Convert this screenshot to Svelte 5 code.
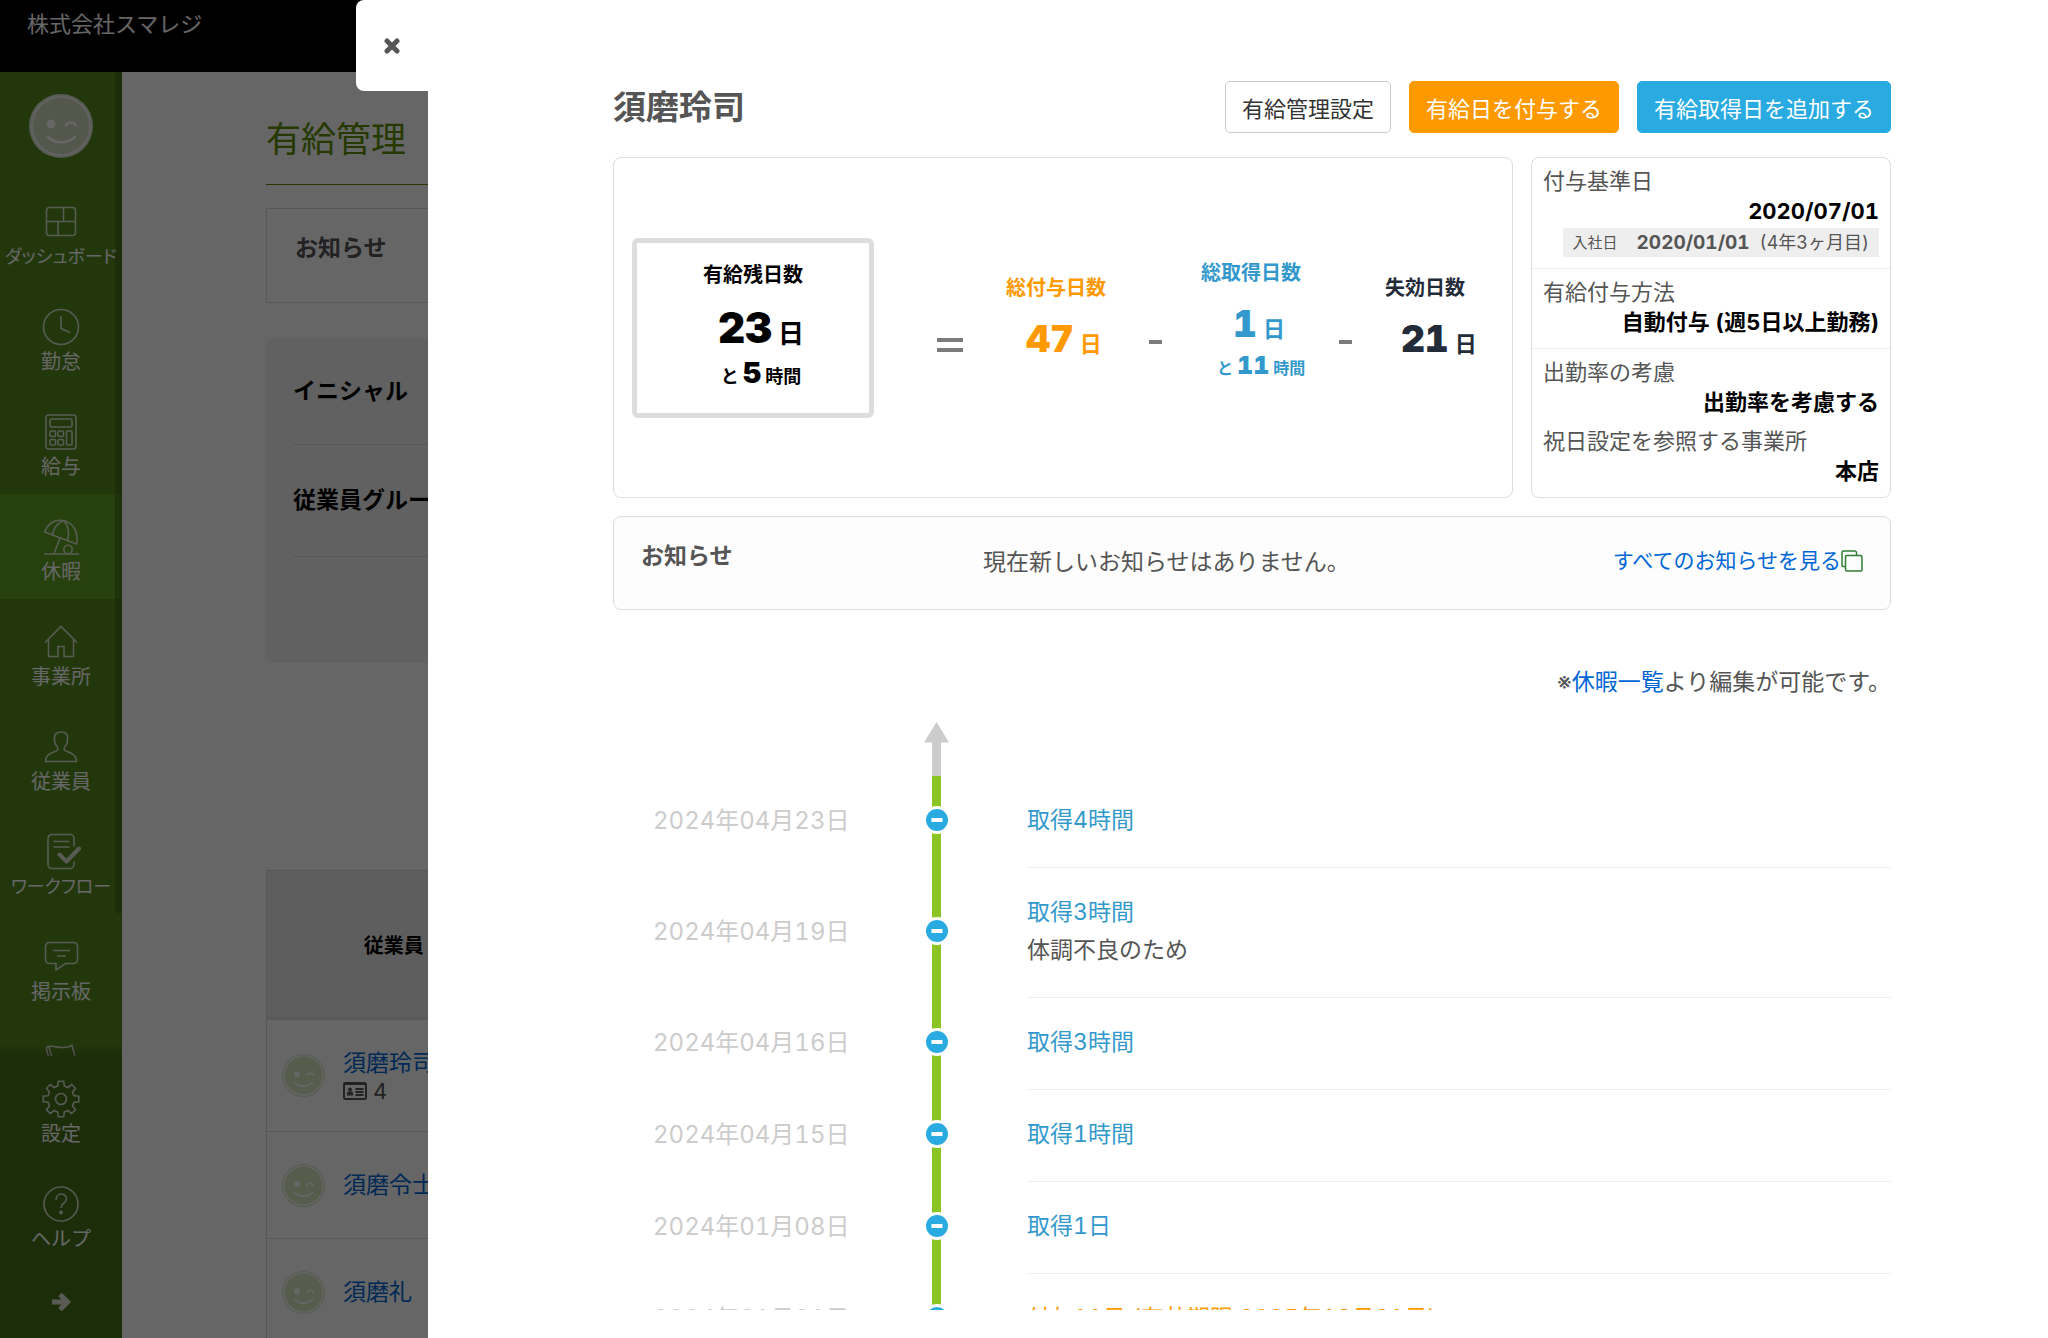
<script>
  const menu = [
    { label: 'ダッシュボード', icon: 'dashboard', tight: true },
    { label: '勤怠', icon: 'clock' },
    { label: '給与', icon: 'calc' },
    { label: '休暇', icon: 'umbrella', active: true },
    { label: '事業所', icon: 'house' },
    { label: '従業員', icon: 'person' },
    { label: 'ワークフロー', icon: 'workflow', tight: true },
    { label: '掲示板', icon: 'board' },
    { label: 'イベント', icon: 'flag' }
  ];
  const tools = [
    { label: '設定', icon: 'gear' },
    { label: 'ヘルプ', icon: 'help' }
  ];
  const staff = [
    { name: '須磨玲司', code: '4' },
    { name: '須磨令士' },
    { name: '須磨礼' }
  ];
  const history = [
    { date: '2024年04月23日', title: '取得4時間' },
    { date: '2024年04月19日', title: '取得3時間', note: '体調不良のため' },
    { date: '2024年04月16日', title: '取得3時間' },
    { date: '2024年04月15日', title: '取得1時間' },
    { date: '2024年01月08日', title: '取得1日' },
    { date: '2024年01月01日', title: '付与11日 (有効期限 2025年12月31日)', grant: true }
  ];

  // Eight-toothed gear outline centred on (20, 20)
  const gear = (() => {
    const pts = [];
    for (let i = 0; i < 8; i++) {
      const a = (i * Math.PI) / 4 - Math.PI / 2;
      for (const [d, r] of [[-0.25, 13.4], [-0.15, 18], [0.15, 18], [0.25, 13.4]]) {
        pts.push(`${(20 + r * Math.cos(a + d)).toFixed(1)} ${(20 + r * Math.sin(a + d)).toFixed(1)}`);
      }
    }
    return `M${pts.join('L')}Z`;
  })();
</script>

{#snippet icon(name)}
  <svg class="icon" viewBox="0 0 40 40" aria-hidden="true">
    {#if name === 'dashboard'}
      <rect x="5.5" y="5.5" width="29" height="28" rx="3" />
      <path d="M5.5 19.5h29M22.5 5.5v14M17 19.5v14" />
    {:else if name === 'clock'}
      <circle cx="20" cy="20" r="17.5" />
      <path d="M20 9v12.5l9 4" />
    {:else if name === 'calc'}
      <rect x="5" y="3" width="30" height="34" rx="2.5" />
      <rect x="9" y="7" width="22" height="8" rx="1.5" />
      <rect x="9" y="19" width="5.5" height="5.5" rx="1" />
      <rect x="17" y="19" width="5.5" height="5.5" rx="1" />
      <rect x="9" y="27.5" width="5.5" height="5.5" rx="1" />
      <rect x="17" y="27.5" width="5.5" height="5.5" rx="1" />
      <rect x="25.5" y="19" width="5.5" height="14" rx="1" />
    {:else if name === 'umbrella'}
      <path d="M3.500 15C7 6.500 14 2 22 3.500C32 5.500 38 15 35.500 27Z" />
      <path d="M11.500 17.500C13 10 17 5.500 23 3.700C27.500 9 28.500 16 26.500 23M19 21L13 36.500M3 37h35" />
      <circle cx="27" cy="32.500" r="4.200" />
    {:else if name === 'house'}
      <path d="M4 20.500L20 4.500l16 16M7.500 17.500V34.500h9.500V24.500h6v10h9.500V17.500" />
    {:else if name === 'person'}
      <path d="M4.500 34.500h31c0-6-4-8-9.500-10c-3-1-3.500-2-2-5c2.500-2.500 2.500-4 2.500-9c0-3.500-2.500-5.500-6.500-5.500s-6.500 2-6.500 5.500c0 5 0 6.500 2.500 9c1.500 3 1 4-2 5c-5.500 2-9.500 4-9.500 10z" />
    {:else if name === 'workflow'}
      <path d="M33 14.500V6.500a4 4 0 0 0-4-4H11a4 4 0 0 0-4 4v26a4 4 0 0 0 4 4h18a4 4 0 0 0 4-4v-3M12.500 9.500h16M12.500 15h16" />
      <path class="thick" d="M18.500 22.500l7 7L38 16.500" />
    {:else if name === 'board'}
      <path d="M8.500 5.500h24a4 4 0 0 1 4 4v13a4 4 0 0 1-4 4H24.500L15 33V26.500H8.500a4 4 0 0 1-4-4v-13a4 4 0 0 1 4-4zM12 13.500h17M16 19h9" />
    {:else if name === 'flag'}
      <path d="M5 5.500L14 38M8 4.500L17 38M5 5.500L8 4.500C14 3 21 8.500 31 3.500L36 22" />
    {:else if name === 'gear'}
      <path d={gear} />
      <circle cx="20" cy="20" r="5.500" />
    {:else if name === 'help'}
      <circle cx="20" cy="20" r="17" />
      <path d="M15 16c0-8 10.500-7.500 10.500-1c0 4-5.500 4.500-5.500 9" />
      <circle class="solid" cx="20" cy="28.500" r="1.200" />
    {/if}
  </svg>
{/snippet}

{#snippet face()}
  <svg class="face" viewBox="0 0 66 66" aria-hidden="true">
    <circle class="rim" cx="33" cy="33" r="32" />
    <circle class="skin" cx="33" cy="33" r="29" />
    <circle class="eye" cx="23" cy="31" r="4.500" />
    <path class="line" d="M38 32.500c1.500-4 8-4 10 0M20 44c7 7 19 7 27 0" />
  </svg>
{/snippet}

<div class="app">
  <header class="topbar">株式会社スマレジ</header>
  <div class="body">
    <aside class="side">
      <nav class="menu">
        <div class="me">{@render face()}</div>
        {#each menu as m}
          <a href="#{m.icon}" class="item" class:active={m.active}>
            {@render icon(m.icon)}
            <span class:tight={m.tight}>{m.label}</span>
          </a>
        {/each}
        <div class="thumb"></div>
      </nav>
      <div class="tools">
        {#each tools as t}
          <a href="#{t.icon}" class="item">
            {@render icon(t.icon)}
            <span>{t.label}</span>
          </a>
        {/each}
        <button class="expand" aria-label="メニューを開く">
          <svg viewBox="0 0 22 22" aria-hidden="true"><path d="M2 11h15M10 3.500l7.500 7.500l-7.500 7.500" /></svg>
        </button>
      </div>
    </aside>

    <main class="main">
      <h1>有給管理</h1>
      <section class="news-back"><h2>お知らせ</h2></section>
      <section class="filter">
        <div class="frow">イニシャル</div>
        <div class="frow">従業員グループ</div>
      </section>
      <table class="staff">
        <thead>
          <tr><th class="who">従業員</th><th></th></tr>
        </thead>
        <tbody>
          {#each staff as s}
            <tr>
              <td>
                <div class="person">
                  {@render face()}
                  <div>
                    <a href="#staff">{s.name}</a>
                    {#if s.code}
                      <div class="code">
                        <svg viewBox="0 0 24 18" aria-hidden="true">
                          <rect x="1" y="1" width="22" height="16" rx="1.500" />
                          <path d="M1 2h22M12.500 7h8M12.500 10h8M12.500 13h8" />
                          <circle class="solid" cx="7" cy="7.500" r="2" />
                          <path class="solid" d="M4 13.500v-2.500q0-1.500 1.500-1.500h3q1.500 0 1.500 1.500v2.500z" />
                        </svg>
                        {s.code}
                      </div>
                    {/if}
                  </div>
                </div>
              </td>
              <td></td>
            </tr>
          {/each}
        </tbody>
      </table>
    </main>
  </div>

  <div class="shade"></div>

  <div class="drawer" role="dialog" aria-label="須磨玲司">
    <button class="close" aria-label="閉じる">
      <svg viewBox="0 0 16 16" aria-hidden="true"><path d="M3 3l10 10M13 3L3 13" /></svg>
    </button>

    <div class="head">
      <h2>須磨玲司</h2>
      <button class="btn">有給管理設定</button>
      <button class="btn orange">有給日を付与する</button>
      <button class="btn blue">有給取得日を追加する</button>
    </div>

    <div class="cards">
      <section class="card sum">
        <div class="stat remain">
          <div class="cap">有給残日数</div>
          <div class="val"><b>23</b>日</div>
          <div class="sub">と<b>5</b>時間</div>
        </div>
        <div class="op eq"><svg viewBox="0 0 26 14" aria-label="="><path d="M0 2h26M0 12h26" /></svg></div>
        <div class="stat total">
          <div class="cap">総付与日数</div>
          <div class="val"><b>47</b>日</div>
        </div>
        <div class="op"><svg viewBox="0 0 13 4" aria-label="-"><path d="M0 2h13" /></svg></div>
        <div class="stat used">
          <div class="cap">総取得日数</div>
          <div class="val"><b>1</b>日</div>
          <div class="sub">と<b>11</b>時間</div>
        </div>
        <div class="op"><svg viewBox="0 0 13 4" aria-label="-"><path d="M0 2h13" /></svg></div>
        <div class="stat lost">
          <div class="cap">失効日数</div>
          <div class="val"><b>21</b>日</div>
        </div>
      </section>

      <section class="card facts">
        <dl>
          <dt>付与基準日</dt>
          <dd>2020/07/01</dd>
          <dd class="joined"><small>入社日</small><b>2020/01/01</b><span>(4年3ヶ月目)</span></dd>
        </dl>
        <dl>
          <dt>有給付与方法</dt>
          <dd>自動付与 (週5日以上勤務)</dd>
        </dl>
        <dl>
          <dt>出勤率の考慮</dt>
          <dd>出勤率を考慮する</dd>
          <dt class="next">祝日設定を参照する事業所</dt>
          <dd>本店</dd>
        </dl>
      </section>
    </div>

    <section class="card news">
      <h3>お知らせ</h3>
      <p>現在新しいお知らせはありません。</p>
      <a href="#news">すべてのお知らせを見る<svg viewBox="0 0 22 22" aria-hidden="true"><rect x="4.500" y="5.500" width="16.500" height="15.500" rx="1.500" /><path d="M4.500 16.500H2.500a1.500 1.500 0 0 1-1.500-1.500V2.500a1.500 1.500 0 0 1 1.500-1.500H14a1.500 1.500 0 0 1 1.500 1.500v3" /></svg></a>
    </section>

    <p class="note">※<a href="#leave">休暇一覧</a>より編集が可能です。</p>

    <div class="timeline">
      <svg class="arrow" viewBox="0 0 27 54" aria-hidden="true"><path d="M13.500 0L26 20.500H18V54H9V20.500H1z" /></svg>
      {#each history as h}
        <div class="event">
          <time>{h.date}</time>
          <div class="axis">
            <svg viewBox="0 0 28 28" aria-hidden="true">
              <circle class="ring" cx="14" cy="14" r="14" />
              <circle class="dot" cx="14" cy="14" r="11" />
              <rect class="bar" x="8.500" y="12" width="11" height="4" />
            </svg>
          </div>
          <div class="what">
            <div class="title" class:grant={h.grant}>{h.title}</div>
            {#if h.note}<div>{h.note}</div>{/if}
          </div>
        </div>
      {/each}
    </div>
  </div>
</div>

<style>
  :global(body) {
    margin: 0;
    font-family: Inter, 'Noto Sans CJK JP', sans-serif;
    font-variant-numeric: tabular-nums;
    color: #555;
  }
  .app, .app * { box-sizing: border-box; }
  h1, h2, h3, p, dl, dd { margin: 0; }
  a { color: #0066d6; text-decoration: none; }
  button { font-family: inherit; cursor: pointer; }
  svg { display: block; fill: none; flex: none; }

  .app {
    position: relative;
    display: flex;
    flex-direction: column;
    height: 100vh;
    overflow: hidden;
    background: #fff;
  }
  .topbar {
    flex: none;
    height: 72px;
    padding: 0 27px;
    background: #000;
    color: #fff;
    font-size: 22px;
    line-height: 48px;
  }
  .body { flex: 1; min-height: 0; display: flex; }

  .side {
    flex: none;
    width: 122px;
    display: flex;
    flex-direction: column;
    background: #558c1e;
  }
  .menu { position: relative; flex: 1; min-height: 0; overflow: hidden; }
  .menu::after {
    content: '';
    position: absolute;
    inset: auto 0 0 0;
    height: 12px;
    background: linear-gradient(transparent, rgba(0, 0, 0, 0.2));
  }
  .thumb {
    position: absolute;
    top: 0;
    right: 0;
    width: 7px;
    height: 841px;
    border-radius: 4px;
    background: rgba(0, 0, 0, 0.2);
  }
  .me {
    display: flex;
    justify-content: center;
    height: 107px;
    padding-top: 21px;
  }
  .item {
    display: flex;
    flex-direction: column;
    align-items: center;
    height: 105px;
    padding-top: 23px;
    color: #fff;
    font-size: 20px;
    line-height: 28px;
    white-space: nowrap;
  }
  .item span { margin-top: 1px; }
  .item .tight { font-size: 18px; font-feature-settings: 'palt'; }
  .active { background: #60a023; }
  .icon { width: 40px; height: 40px; stroke: #f2f4ee; stroke-width: 1.6; opacity: 0.85; }
  .icon .thick { stroke-width: 4; stroke-linecap: round; stroke-linejoin: round; }
  .icon .solid { fill: #f2f4ee; }
  .tools { flex: none; background: #46721a; }
  .expand {
    display: flex;
    align-items: center;
    justify-content: center;
    width: 100%;
    height: 72px;
    padding: 0;
    border: 0;
    background: none;
  }
  .expand svg { width: 22px; height: 22px; stroke: #dfe5d6; stroke-width: 5; }

  .face { width: 66px; height: 66px; }
  .rim { fill: #dde3d2; }
  .skin { fill: #cfd9bd; stroke: #f2f4ee; stroke-width: 2; }
  .eye { fill: #fff; }
  .line { stroke: #fff; stroke-width: 2.5; stroke-linecap: round; }

  .main { flex: 1; min-width: 0; padding: 0 144px; }
  h1 {
    padding: 40px 0 17px;
    border-bottom: 1px solid #5c8f00;
    color: #5c8f00;
    font-size: 35px;
    font-weight: 400;
    line-height: 55px;
  }
  .news-back {
    height: 95px;
    margin-top: 23px;
    padding: 22px 28px;
    border: 1px solid #ddd;
  }
  .news-back h2 { color: #555; font-size: 23px; line-height: 34px; }
  .filter {
    height: 325px;
    margin-top: 35px;
    padding: 0 27px;
    border-radius: 8px;
    background: #f3f3f3;
  }
  .frow {
    height: 112px;
    border-bottom: 1px solid #ddd;
    color: #000;
    font-size: 23px;
    font-weight: 700;
    line-height: 110px;
  }
  .frow:first-child { height: 107px; line-height: 106px; }
  .staff {
    width: 100%;
    margin-top: 207px;
    border-collapse: collapse;
    border: 1px solid #d8d8d8;
  }
  th {
    height: 148px;
    padding: 0;
    border-bottom: 3px solid #ddd;
    background: #ebebeb;
    color: #000;
    font-size: 20px;
  }
  .who { width: 254px; }
  .staff td { height: 107px; padding: 0 15px; border-bottom: 1px solid #ddd; }
  .staff tr:first-child td { height: 113px; }
  .person { display: flex; align-items: center; gap: 18px; font-size: 23px; line-height: 30px; white-space: nowrap; }
  .person .face { width: 43px; height: 43px; }
  .person .rim { fill: none; stroke: #dfe8d0; stroke-width: 2; }
  .person .skin { fill: #d7e8bd; stroke: none; }
  .code { display: flex; align-items: center; gap: 6px; font-size: 22px; line-height: 26px; }
  .code svg { width: 24px; height: 18px; stroke: #555; stroke-width: 2; }
  .code .solid { fill: #555; stroke: none; }

  .shade { position: absolute; inset: 0; background: rgba(0, 0, 0, 0.6); }

  .drawer {
    position: absolute;
    inset: 0 0 0 428px;
    display: flex;
    flex-direction: column;
    padding: 81px 157px 28px 185px;
    background: #fff;
  }
  .close {
    position: absolute;
    top: 0;
    right: 100%;
    display: flex;
    align-items: center;
    justify-content: center;
    width: 72px;
    height: 91px;
    padding: 0;
    border: 0;
    border-radius: 8px 0 0 8px;
    background: #fff;
  }
  .close svg { width: 16px; height: 16px; stroke: #555; stroke-width: 5; stroke-linecap: round; }
  .head { display: flex; align-items: center; gap: 18px; }
  .head h2 { flex: 1; font-size: 33px; line-height: 52px; }
  .btn {
    height: 52px;
    padding: 0 16px;
    border: 1px solid #ccc;
    border-radius: 5px;
    background: #fff;
    color: #333;
    font-size: 22px;
  }
  .orange { border-color: #f90; background: #f90; color: #fff; }
  .blue { border-color: #29abe2; background: #29abe2; color: #fff; }

  .cards { display: flex; gap: 18px; margin-top: 24px; }
  .card { border: 1px solid #ddd; border-radius: 8px; }
  .sum {
    flex: 1;
    display: grid;
    grid-template-columns: 242px 132px 100px 95px 100px 84px 80px;
    align-items: center;
    padding-left: 18px;
  }
  .stat { font-weight: 700; text-align: center; white-space: nowrap; padding-bottom: 16px; }
  .cap { font-size: 20px; line-height: 30px; margin-bottom: 14px; }
  .val { padding-left: 16px; font-size: 22px; line-height: 44px; }
  .val b { margin-right: 6px; font-size: 37px; }
  .sub { padding-left: 16px; font-size: 16px; line-height: 28px; }
  .sub b { margin: 0 4px; font-size: 25px; }
  .remain {
    height: 180px;
    padding-top: 17px;
    border: 5px solid #ddd;
    border-radius: 6px;
    color: #000;
  }
  .remain .val { font-size: 26px; line-height: 48px; }
  .remain .val b { font-size: 42px; }
  .remain .sub { font-size: 18px; line-height: 30px; }
  .remain .sub b { font-size: 29px; }
  .total { color: #f90; }
  .used { color: #39c; }
  .lost { color: #242b38; }
  .op { display: flex; justify-content: center; padding: 28px 0 0 4px; }
  .op svg { width: 13px; height: 4px; stroke: #7b7b7b; stroke-width: 4; }
  .eq { padding: 35px 0 0 20px; }
  .eq svg { width: 26px; height: 14px; }

  .facts { width: 360px; font-size: 22px; line-height: 30px; }
  dl { padding: 8px 11px 11px; border-bottom: 1px solid #eee; }
  dl:last-child { border: 0; }
  dd { color: #000; font-weight: 700; text-align: right; }
  .next { margin-top: 9px; }
  .facts .joined {
    display: flex;
    align-items: center;
    width: fit-content;
    margin: 2px 0 0 auto;
    padding: 0 10px;
    background: #eee;
    color: #555;
    font-weight: 400;
    line-height: 29px;
  }
  .joined small { margin-right: 19px; font-size: 15px; }
  .joined b { margin-right: 10px; font-size: 19px; }
  .joined span { font-size: 18px; }

  .news {
    display: grid;
    grid-template-columns: 342px 1fr auto;
    height: 94px;
    margin-top: 18px;
    padding: 22px 27px;
    background: #fdfdfd;
    font-size: 23px;
    line-height: 34px;
  }
  .news h3 { font-size: 23px; }
  .news p { margin-top: 6px; }
  .news a { display: flex; align-items: center; height: 34px; margin-top: 5px; font-size: 21px; }
  .news svg { width: 22px; height: 22px; stroke: #2e7d32; stroke-width: 1.5; }

  .note { margin-top: 54px; font-size: 23px; line-height: 36px; text-align: right; }

  .timeline { flex: 1; min-height: 0; margin-top: 22px; overflow: hidden; font-size: 23px; line-height: 38px; }
  .arrow { width: 27px; height: 54px; margin-left: 310px; fill: #ccc; }
  .event { display: grid; grid-template-columns: 310px 27px 1fr; }
  time { align-self: center; padding: 25px 0 28px 40px; color: #ccc; font-size: 24px; }
  .axis {
    display: flex;
    align-items: center;
    justify-content: center;
    padding-bottom: 4px;
    background: linear-gradient(#8cc425, #8cc425) center / 9px 100% no-repeat;
  }
  .axis svg { width: 28px; height: 28px; }
  .ring, .bar { fill: #fff; }
  .dot { fill: #29abe2; }
  .what { margin-left: 77px; padding: 25px 0 28px; border-bottom: 1px solid #eee; }
  .title { color: #39c; }
  .grant { color: #f90; }
</style>
